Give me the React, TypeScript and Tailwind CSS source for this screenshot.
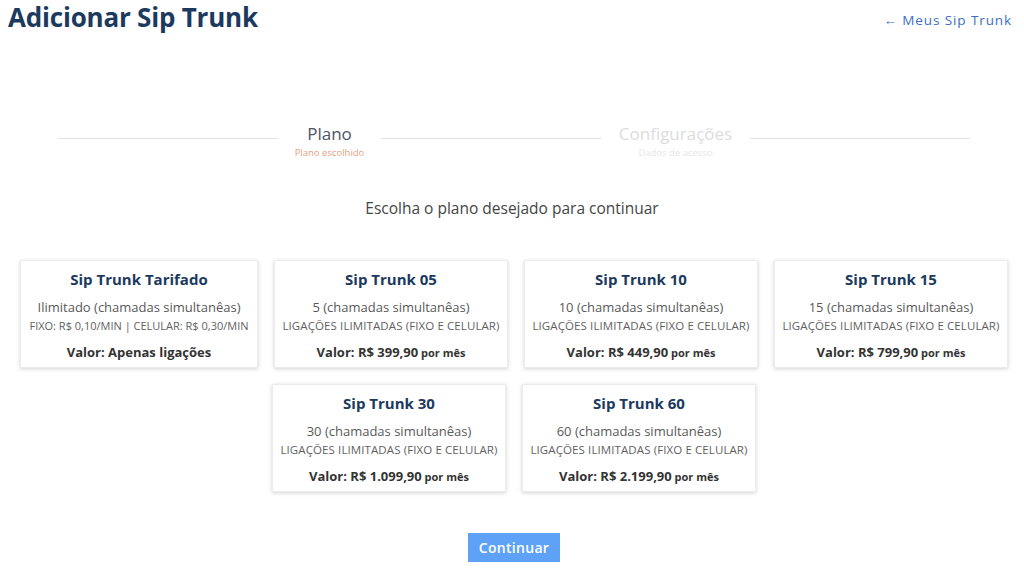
const plans = [
  { nome: 'Sip Trunk Tarifado', canais: 'Ilimitado (chamadas simultanêas)', info: 'FIXO: R$ 0,10/MIN | CELULAR: R$ 0,30/MIN', valor: 'Apenas ligações', mensal: false },
  { nome: 'Sip Trunk 05', canais: '5 (chamadas simultanêas)', info: 'LIGAÇÕES ILIMITADAS (FIXO E CELULAR)', valor: 'R$ 399,90', mensal: true },
  { nome: 'Sip Trunk 10', canais: '10 (chamadas simultanêas)', info: 'LIGAÇÕES ILIMITADAS (FIXO E CELULAR)', valor: 'R$ 449,90', mensal: true },
  { nome: 'Sip Trunk 15', canais: '15 (chamadas simultanêas)', info: 'LIGAÇÕES ILIMITADAS (FIXO E CELULAR)', valor: 'R$ 799,90', mensal: true },
  { nome: 'Sip Trunk 30', canais: '30 (chamadas simultanêas)', info: 'LIGAÇÕES ILIMITADAS (FIXO E CELULAR)', valor: 'R$ 1.099,90', mensal: true },
  { nome: 'Sip Trunk 60', canais: '60 (chamadas simultanêas)', info: 'LIGAÇÕES ILIMITADAS (FIXO E CELULAR)', valor: 'R$ 2.199,90', mensal: true },
]

export default function App() {
  return (
    <div className="min-h-[572px] bg-white font-['Open_Sans',sans-serif]">
      {/* Cabeçalho */}
      <div className="flex items-start justify-between pl-2 pr-3">
        <h1 className="-mt-[2px] text-[26px] font-bold text-[#1c3a5e] tracking-[-0.2px]">Adicionar Sip Trunk</h1>
        <a className="mt-[10px] text-[13.5px] text-[#3b6fc6] tracking-[0.9px]">← Meus Sip Trunk</a>
      </div>

      {/* Etapas */}
      <div className="mt-[86px] ml-[58px] flex w-[912px]">
        <div className="mt-[15px] h-px w-[220px] bg-[#e2e2e2]" />
        <div className="flex w-[103px] flex-col items-center">
          <span className="text-[17px] leading-[22px] text-[#4b5563]">Plano</span>
          <span className="mt-[1px] text-[9.5px] text-[#e3a183]">Plano escolhido</span>
        </div>
        <div className="mt-[15px] h-px w-[220px] bg-[#e2e2e2]" />
        <div className="flex w-[149px] flex-col items-center">
          <span className="text-[17px] leading-[22px] text-[#dcdcdc]">Configurações</span>
          <span className="mt-[1px] text-[9.5px] text-[#e6e6e6]">Dados de acesso</span>
        </div>
        <div className="mt-[15px] h-px w-[220px] bg-[#e2e2e2]" />
      </div>

      <p className="mt-[37px] text-center text-[15.5px] text-[#454545]">Escolha o plano desejado para continuar</p>

      {/* Planos */}
      <div className="mx-auto mt-[39px] flex w-[1000px] flex-wrap justify-center gap-x-4 gap-y-4 pl-[4px]">
        {plans.map((p, i) => (
          <div
            key={p.nome}
            className={`flex h-[108px] ${i === 0 ? 'w-[238px]' : 'w-[234px]'} flex-col items-center border border-[#ececec] bg-white pt-[8px] shadow-[0_1px_4px_rgba(0,0,0,0.18)]`}
          >
            <h3 className="text-[15px] font-bold leading-[20px] text-[#1c3a5e]">{p.nome}</h3>
            <p className="mt-[10px] text-[13px] leading-[17px] text-[#595959]">{p.canais}</p>
            <p className={`mt-[1px] ${i === 0 ? 'text-[11px]' : 'text-[11.5px] tracking-[0.1px]'} leading-[17px] text-[#5f5f5f]`}>{p.info}</p>
            <p className="mt-[9px] text-[13px] font-bold leading-[18px] text-[#333]">
              Valor: {p.valor}
              {p.mensal && <span className="text-[11px]"> por mês</span>}
            </p>
          </div>
        ))}
      </div>

      <div className="mt-[41px] flex justify-center pl-[4px]">
        <button className="h-[29px] w-[92px] bg-[#5ea2f8] text-[14px] font-semibold tracking-[0.3px] text-white">Continuar</button>
      </div>
    </div>
  )
}
